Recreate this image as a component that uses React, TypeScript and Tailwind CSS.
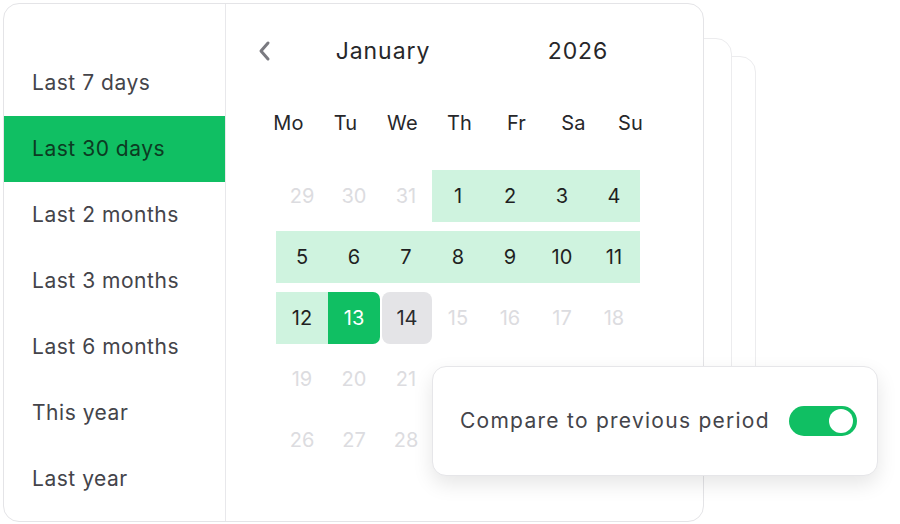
import React from "react";

const presets = [
  "Last 7 days",
  "Last 30 days",
  "Last 2 months",
  "Last 3 months",
  "Last 6 months",
  "This year",
  "Last year",
];

const weekdays = ["Mo", "Tu", "We", "Th", "Fr", "Sa", "Su"];

type Day = { n: number | null; kind: "muted" | "range" | "start" | "today" };

const muted = (ns: (number | null)[]) => ns.map((n) => ({ n, kind: "muted" as const }));

// cells under the compare popover are left blank
const weeks: Day[][] = [
  [
    ...muted([29, 30, 31]),
    { n: 1, kind: "range" },
    { n: 2, kind: "range" },
    { n: 3, kind: "range" },
    { n: 4, kind: "range" },
  ],
  [5, 6, 7, 8, 9, 10, 11].map((n) => ({ n, kind: "range" as const })),
  [
    { n: 12, kind: "range" },
    { n: 13, kind: "start" },
    { n: 14, kind: "today" },
    ...muted([15, 16, 17, 18]),
  ],
  muted([19, 20, 21, null, null, null, null]),
  muted([26, 27, 28, null, null, null, null]),
];

function DayCell({ day }: { day: Day }) {
  if (day.kind === "range")
    return <div className="h-[52px] flex items-center justify-center bg-[#cff3df] text-[#1f1f22]">{day.n}</div>;
  if (day.kind === "start")
    return (
      <div className="h-[52px] flex items-center justify-center bg-[#10bf63] text-white rounded-r-[7px]">
        {day.n}
      </div>
    );
  if (day.kind === "today")
    return (
      <div className="h-[52px] flex items-center justify-center ml-[2px] bg-[#e4e4e7] text-[#2a2a2e] rounded-[8px]">
        {day.n}
      </div>
    );
  return <div className="h-[52px] flex items-center justify-center text-[#dcdce0]">{day.n}</div>;
}

export default function App() {
  return (
    <div className="relative w-[900px] h-[524px] bg-white overflow-hidden font-['Inter',sans-serif]">
      {/* stacked cards behind */}
      <div className="absolute left-[500px] top-[56px] w-[256px] h-[400px] rounded-[16px] border border-[#ececee] bg-white" />
      <div className="absolute left-[480px] top-[38px] w-[252px] h-[400px] rounded-[16px] border border-[#ececee] bg-white" />

      {/* main card */}
      <div className="relative ml-[3px] mt-[3px] w-[701px] h-[519px] flex rounded-[16px] border border-[#e4e4e7] bg-white overflow-hidden">
        <div className="w-[222px] border-r border-[#e8e8eb] pt-[46px]">
          {presets.map((p) => (
            <div
              key={p}
              className={
                p === "Last 30 days"
                  ? "h-[66px] flex items-center pl-[28px] text-[21px] tracking-[0.025em] bg-[#10bf63] text-[#0c3b22]"
                  : "h-[66px] flex items-center pl-[28px] text-[21px] tracking-[0.025em] text-[#44444a]"
              }
            >
              {p}
            </div>
          ))}
        </div>

        <div className="flex-1 pt-[27px]">
          <div className="h-[40px] flex items-center pl-[31px]">
            <svg width="14" height="22" viewBox="0 0 14 22" fill="none">
              <path d="M11 3 L4 11 L11 19" stroke="#7a7a80" strokeWidth="3" strokeLinecap="round" strokeLinejoin="round" />
            </svg>
            <span className="ml-[19px] w-[186px] text-center text-[23px] text-[#27272a] tracking-[0.04em]">January</span>
            <span className="ml-[52px] w-[100px] text-center text-[23px] text-[#27272a] tracking-[0.04em]">2026</span>
          </div>

          <div className="mt-[37px] ml-[34px] grid grid-cols-[repeat(7,57px)] h-[30px] items-center">
            {weekdays.map((w) => (
              <div key={w} className="text-center text-[20px] text-[#27272a] tracking-[0.01em]">
                {w}
              </div>
            ))}
          </div>

          <div className="mt-[32px] ml-[50px] grid grid-cols-[repeat(7,52px)] gap-y-[9px] text-[20px]">
            {weeks.flat().map((d, i) => (
              <DayCell key={i} day={d} />
            ))}
          </div>
        </div>
      </div>

      {/* compare popover */}
      <div className="absolute left-[432px] top-[366px] w-[446px] h-[110px] flex items-center justify-between pl-[27px] pr-[20px] rounded-[14px] border border-[#e6e6e9] bg-white shadow-[0_8px_20px_rgba(0,0,0,0.10)]">
        <span className="text-[21px] text-[#44444a] tracking-[0.06em]">Compare to previous period</span>
        <div className="w-[68px] h-[30px] rounded-full bg-[#10bf63] flex items-center justify-end pr-[4px]">
          <div className="w-[24px] h-[24px] rounded-full bg-white" />
        </div>
      </div>
    </div>
  );
}
